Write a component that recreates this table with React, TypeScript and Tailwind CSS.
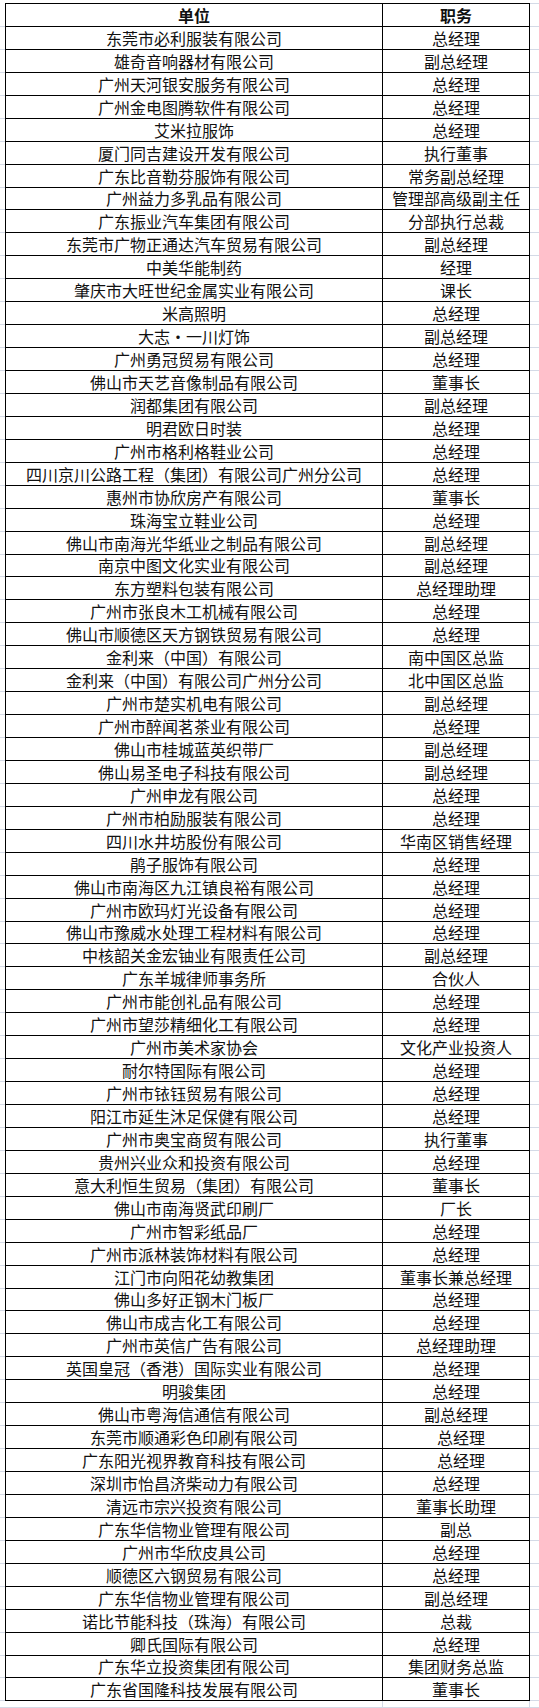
import React from "react";

// 单位 / 职务 名单，shift 表示职务一栏文字略向右偏
const ROWS: { unit: string; title: string; shift?: boolean }[] = [
  { unit: "东莞市必利服装有限公司", title: "总经理" },
  { unit: "雄奇音响器材有限公司", title: "副总经理" },
  { unit: "广州天河银安服务有限公司", title: "总经理" },
  { unit: "广州金电图腾软件有限公司", title: "总经理" },
  { unit: "艾米拉服饰", title: "总经理" },
  { unit: "厦门同吉建设开发有限公司", title: "执行董事" },
  { unit: "广东比音勒芬服饰有限公司", title: "常务副总经理" },
  { unit: "广州益力多乳品有限公司", title: "管理部高级副主任" },
  { unit: "广东振业汽车集团有限公司", title: "分部执行总裁" },
  { unit: "东莞市广物正通达汽车贸易有限公司", title: "副总经理" },
  { unit: "中美华能制药", title: "经理" },
  { unit: "肇庆市大旺世纪金属实业有限公司", title: "课长" },
  { unit: "米高照明", title: "总经理" },
  { unit: "大志・一川灯饰", title: "副总经理" },
  { unit: "广州勇冠贸易有限公司", title: "总经理" },
  { unit: "佛山市天艺音像制品有限公司", title: "董事长" },
  { unit: "润都集团有限公司", title: "副总经理" },
  { unit: "明君欧日时装", title: "总经理" },
  { unit: "广州市格利格鞋业公司", title: "总经理" },
  { unit: "四川京川公路工程（集团）有限公司广州分公司", title: "总经理" },
  { unit: "惠州市协欣房产有限公司", title: "董事长" },
  { unit: "珠海宝立鞋业公司", title: "总经理" },
  { unit: "佛山市南海光华纸业之制品有限公司", title: "副总经理" },
  { unit: "南京中图文化实业有限公司", title: "副总经理" },
  { unit: "东方塑料包装有限公司", title: "总经理助理" },
  { unit: "广州市张良木工机械有限公司", title: "总经理" },
  { unit: "佛山市顺德区天方钢铁贸易有限公司", title: "总经理" },
  { unit: "金利来（中国）有限公司", title: "南中国区总监" },
  { unit: "金利来（中国）有限公司广州分公司", title: "北中国区总监" },
  { unit: "广州市楚实机电有限公司", title: "副总经理" },
  { unit: "广州市醉闻茗茶业有限公司", title: "总经理" },
  { unit: "佛山市桂城蓝英织带厂", title: "副总经理" },
  { unit: "佛山易圣电子科技有限公司", title: "副总经理" },
  { unit: "广州申龙有限公司", title: "总经理" },
  { unit: "广州市柏励服装有限公司", title: "总经理" },
  { unit: "四川水井坊股份有限公司", title: "华南区销售经理" },
  { unit: "鹃子服饰有限公司", title: "总经理" },
  { unit: "佛山市南海区九江镇良裕有限公司", title: "总经理" },
  { unit: "广州市欧玛灯光设备有限公司", title: "总经理" },
  { unit: "佛山市豫威水处理工程材料有限公司", title: "总经理" },
  { unit: "中核韶关金宏铀业有限责任公司", title: "副总经理" },
  { unit: "广东羊城律师事务所", title: "合伙人" },
  { unit: "广州市能创礼品有限公司", title: "总经理" },
  { unit: "广州市望莎精细化工有限公司", title: "总经理" },
  { unit: "广州市美术家协会", title: "文化产业投资人" },
  { unit: "耐尔特国际有限公司", title: "总经理" },
  { unit: "广州市铱钰贸易有限公司", title: "总经理" },
  { unit: "阳江市延生沐足保健有限公司", title: "总经理" },
  { unit: "广州市奥宝商贸有限公司", title: "执行董事" },
  { unit: "贵州兴业众和投资有限公司", title: "总经理" },
  { unit: "意大利恒生贸易（集团）有限公司", title: "董事长" },
  { unit: "佛山市南海贤武印刷厂", title: "厂长" },
  { unit: "广州市智彩纸品厂", title: "总经理" },
  { unit: "广州市派林装饰材料有限公司", title: "总经理" },
  { unit: "江门市向阳花幼教集团", title: "董事长兼总经理" },
  { unit: "佛山多好正钢木门板厂", title: "总经理" },
  { unit: "佛山市成吉化工有限公司", title: "总经理" },
  { unit: "广州市英信广告有限公司", title: "总经理助理" },
  { unit: "英国皇冠（香港）国际实业有限公司", title: "总经理" },
  { unit: "明骏集团", title: "总经理" },
  { unit: "佛山市粤海信通信有限公司", title: "副总经理" },
  { unit: "东莞市顺通彩色印刷有限公司", title: "总经理", shift: true },
  { unit: "广东阳光视界教育科技有限公司", title: "总经理", shift: true },
  { unit: "深圳市怡昌济柴动力有限公司", title: "总经理" },
  { unit: "清远市宗兴投资有限公司", title: "董事长助理" },
  { unit: "广东华信物业管理有限公司", title: "副总" },
  { unit: "广州市华欣皮具公司", title: "总经理" },
  { unit: "顺德区六钢贸易有限公司", title: "总经理" },
  { unit: "广东华信物业管理有限公司", title: "副总经理" },
  { unit: "诺比节能科技（珠海）有限公司", title: "总裁" },
  { unit: "卿氏国际有限公司", title: "总经理" },
  { unit: "广东华立投资集团有限公司", title: "集团财务总监" },
  { unit: "广东省国隆科技发展有限公司", title: "董事长" },
];

const GRID = "grid grid-cols-[5px_377px_148px_9px]";

export default function App() {
  return (
    <div
      className="min-h-[1708px] w-[539px] overflow-hidden bg-white pt-[3px] text-[16px] leading-none text-[#111]"
      style={{ fontFamily: '"Noto Sans CJK SC", "Noto Sans", sans-serif' }}
    >
      {/* 表头 */}
      <div className={`${GRID} h-[23.94px]`}>
        <div className="border-b border-[#d4dae6]" />
        <div className="flex items-center justify-center border-t border-b border-l border-black font-bold">
          单位
        </div>
        <div className="flex items-center justify-center border-t border-r border-b border-l border-black font-bold">
          职务
        </div>
        <div className="border-t border-b border-[#d4dae6]" />
      </div>

      {ROWS.map((row, i) => (
        <div key={i} className={`${GRID} h-[22.94px]`}>
          <div className="border-b border-[#d4dae6]" />
          <div className="flex items-center justify-center whitespace-nowrap border-b border-l border-black">
            {row.unit}
          </div>
          <div
            className={`flex items-center justify-center whitespace-nowrap border-r border-b border-l border-black ${
              row.shift ? "pl-[10px]" : ""
            }`}
          >
            {row.title}
          </div>
          <div className="border-b border-[#d4dae6]" />
        </div>
      ))}

      {/* 表格下方的浅色网格线 */}
      <div className={`${GRID} h-[7px]`}>
        <div className="border-b border-[#d4dae6]" />
        <div className="border-b border-[#d4dae6]" />
        <div className="border-b border-l border-r border-[#d4dae6]" />
        <div className="border-b border-[#d4dae6]" />
      </div>
    </div>
  );
}
